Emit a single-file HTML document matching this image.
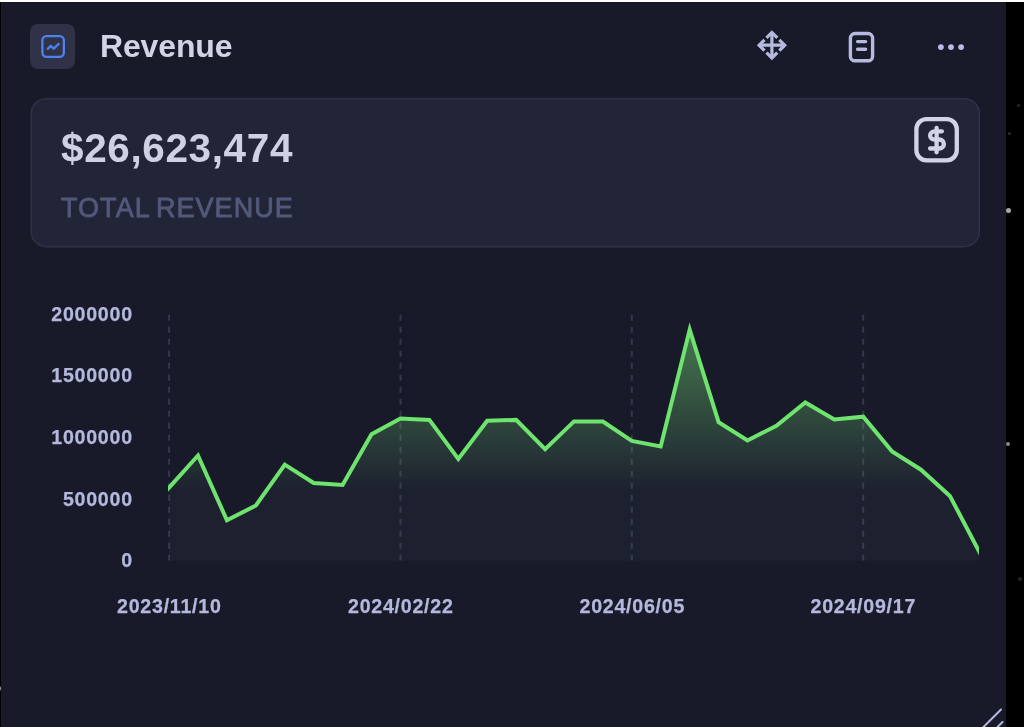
<!DOCTYPE html>
<html lang="en">
<head>
<meta charset="utf-8">
<title>Revenue</title>
<style>
  html, body { margin: 0; padding: 0; }
  body {
    width: 1024px; height: 727px; overflow: hidden; position: relative;
    background: #000;
    font-family: "Liberation Sans", sans-serif;
  }
  .topline { position: absolute; left: 0; top: 0; width: 1024px; height: 2px; background: #fff; }
  .widget {
    position: absolute; left: 1px; top: 2px; width: 1005px; height: 725px;
    background: #181a29;
    will-change: transform;
  }
  .header { position: absolute; left: 0; top: 0; width: 100%; height: 96px; }
  .badge {
    position: absolute; left: 29.4px; top: 21.9px; width: 44.4px; height: 45px;
    border-radius: 8px; background: #303247;
  }
  .title {
    position: absolute; left: 99px; top: 26px; margin: 0;
    font-size: 32px; line-height: 36px; font-weight: 700; color: #d2d4e6;
    letter-spacing: -0.15px; white-space: nowrap;
  }
  .card {
    position: absolute; left: 31.5px; top: 98px; width: 946px; height: 146px;
    border-radius: 15px;
  }
  .amount {
    position: absolute; left: 28.5px; top: 26.3px; margin: 0;
    font-size: 40.5px; line-height: 44px; font-weight: 700; color: #cfd1e3;
    letter-spacing: 0.62px; white-space: nowrap;
  }
  .caption {
    position: absolute; left: 28.5px; top: 92.9px; margin: 0;
    font-size: 27px; line-height: 30px; font-weight: 400; color: #535979;
    letter-spacing: 1.05px; word-spacing: -2.4px; white-space: nowrap; -webkit-text-stroke: 0.8px #535979;
  }
  .ylab, .xlab {
    position: absolute; font-size: 19.6px; line-height: 22px; font-weight: 700;
    color: #b4b8dd; letter-spacing: 0.75px; white-space: nowrap;
    -webkit-text-stroke: 0.25px #b4b8dd;
  }
  .ylab { right: 873.2px; text-align: right; }
  .xlab { width: 140px; text-align: center; top: 593.5px; margin-left: 0.3px; transform: translateY(-0.6px); }
  svg { position: absolute; left: 0; top: 0; }
  .star { position: absolute; border-radius: 50%; }
</style>
</head>
<body>
<div class="topline"></div>

<div class="widget">
  <svg class="cardbg" width="1005" height="260" viewBox="1 2 1005 260">
    <rect x="31.2" y="98.7" width="948.1" height="147.9" rx="15" fill="#222438" stroke="#2e3148" stroke-width="1.6"/>
  </svg>
  <div class="header">
    <div class="badge"></div>
    <h1 class="title">Revenue</h1>
  </div>

  <div class="card">
    <p class="amount">$26,623,474</p>
    <p class="caption">TOTAL REVENUE</p>
  </div>

  <div class="ylab" style="top:301px">2000000</div>
  <div class="ylab" style="top:362px">1500000</div>
  <div class="ylab" style="top:424px">1000000</div>
  <div class="ylab" style="top:486px">500000</div>
  <div class="ylab" style="top:547px">0</div>

  <div class="xlab" style="left:98px">2023/11/10</div>
  <div class="xlab" style="left:329.5px">2024/02/22</div>
  <div class="xlab" style="left:561px">2024/06/05</div>
  <div class="xlab" style="left:792px">2024/09/17</div>
</div>

<!-- all vector art drawn in page pixel coordinates -->
<svg width="1024" height="727" viewBox="0 0 1024 727">
  <defs>
    <linearGradient id="areaFill" gradientUnits="userSpaceOnUse" x1="0" y1="326" x2="0" y2="490">
      <stop offset="0" stop-color="#74dc70" stop-opacity="0.48"/>
      <stop offset="1" stop-color="#74dc70" stop-opacity="0"/>
    </linearGradient>
    <clipPath id="plotClip"><rect x="168.1" y="300" width="810.9" height="262"/></clipPath>
  </defs>

  <!-- header badge icon -->
  <g fill="none" stroke="#4e82ee" stroke-width="2.3" stroke-linecap="round" stroke-linejoin="round">
    <rect x="42.4" y="36.15" width="21.45" height="20.8" rx="4.2"/>
    <polyline points="47.8,48.9 50.7,45.8 53.7,48.7 58.7,43.9"/>
  </g>

  <!-- move icon -->
  <g fill="none" stroke="#b6badf" stroke-width="3.2" stroke-linejoin="miter" transform="translate(-0.1 0.2)">
    <path d="M759 45H785M772 32V58"/>
    <path d="M766.6 37.6L772 32.2L777.4 37.6"/>
    <path d="M766.6 52.4L772 57.8L777.4 52.4"/>
    <path d="M764.6 39.6L759.2 45L764.6 50.4"/>
    <path d="M779.4 39.6L784.8 45L779.4 50.4"/>
  </g>

  <!-- document icon -->
  <g fill="none" stroke="#b6badf" stroke-width="3.4" stroke-linecap="round">
    <rect x="850.4" y="33.5" width="22.2" height="27.3" rx="4.6"/>
    <path d="M857.6 41.6H865.6M857.6 49.2H865.6"/>
  </g>

  <!-- more icon -->
  <g fill="#b9bde6">
    <circle cx="940.9" cy="47.1" r="2.9"/>
    <circle cx="951" cy="47.1" r="2.9"/>
    <circle cx="961.1" cy="47.1" r="2.9"/>
  </g>

  <!-- dollar icon -->
  <g fill="none" stroke="#d2d4e6" stroke-width="4.3" stroke-linecap="round" stroke-linejoin="round">
    <rect x="916.4" y="119.2" width="40.4" height="41.1" rx="10"/>
    <path d="M936.6 127.9V152.3"/>
    <path d="M941.9 131.3H934.6A4.5 4.1 0 0 0 934.6 139.5H939.2A4.7 4.5 0 0 1 939.2 148.5H930.1"/>
  </g>

  <!-- grid -->
  <g stroke="#34374e" stroke-width="2" stroke-dasharray="6 6">
    <path d="M169.1 314.8V560.4M400.5 314.8V560.4M631.8 314.8V560.4M863.2 314.8V560.4"/>
  </g>

  <!-- area + line -->
  <path fill="#78a0aa" fill-opacity="0.055" d="M169.1 487.6L198.0 455.5L226.9 520.2L255.9 505.5L284.8 464.6L313.7 483L342.6 484.9L371.5 434.3L400.5 418.5L429.4 419.9L458.3 459.0L487.2 420.8L516.1 419.9L545.1 449.1L574.0 421.4L602.9 421.6L631.8 440.9L660.7 446.5L689.7 329.6L718.6 422.2L747.5 440.5L776.4 425.8L805.3 402.5L834.3 419.5L863.2 416.7L892.1 451.5L921.0 469.7L949.9 495.9L978.9 551V560.4H169.1Z"/>
  <path fill="url(#areaFill)" d="M169.1 487.6L198.0 455.5L226.9 520.2L255.9 505.5L284.8 464.6L313.7 483L342.6 484.9L371.5 434.3L400.5 418.5L429.4 419.9L458.3 459.0L487.2 420.8L516.1 419.9L545.1 449.1L574.0 421.4L602.9 421.6L631.8 440.9L660.7 446.5L689.7 329.6L718.6 422.2L747.5 440.5L776.4 425.8L805.3 402.5L834.3 419.5L863.2 416.7L892.1 451.5L921.0 469.7L949.9 495.9L978.9 551V560.4H169.1Z"/>
  <path fill="none" stroke="#6ee46e" stroke-width="4" stroke-linejoin="miter" clip-path="url(#plotClip)" d="M165.1 492.0L169.1 487.6L198.0 455.5L226.9 520.2L255.9 505.5L284.8 464.6L313.7 483L342.6 484.9L371.5 434.3L400.5 418.5L429.4 419.9L458.3 459.0L487.2 420.8L516.1 419.9L545.1 449.1L574.0 421.4L602.9 421.6L631.8 440.9L660.7 446.5L689.7 329.6L718.6 422.2L747.5 440.5L776.4 425.8L805.3 402.5L834.3 419.5L863.2 416.7L892.1 451.5L921.0 469.7L949.9 495.9L978.9 551L982.9 558.6"/>

  <!-- resize handle -->
  <g stroke="#b6badf" stroke-width="2" stroke-linecap="round">
    <path d="M1001 709.5L982 728.5M1002.5 722L995.5 729"/>
  </g>
</svg>

<!-- starfield peeking out on the right -->
<div class="star" style="left:1006px;top:208px;width:5px;height:5px;background:#a9a9a9"></div>
<div class="star" style="left:1005.5px;top:442px;width:4px;height:4px;background:#8a8a8a"></div>
<div class="star" style="left:1008px;top:132px;width:3px;height:3px;background:#2c2c2c"></div>
<div class="star" style="left:1017px;top:104px;width:3px;height:3px;background:#2a2a2a"></div>
<div class="star" style="left:1018px;top:577px;width:4px;height:4px;background:#242424"></div>
<div class="star" style="left:-3px;top:686px;width:4px;height:5px;background:#9a9a9a"></div>
</body>
</html>
